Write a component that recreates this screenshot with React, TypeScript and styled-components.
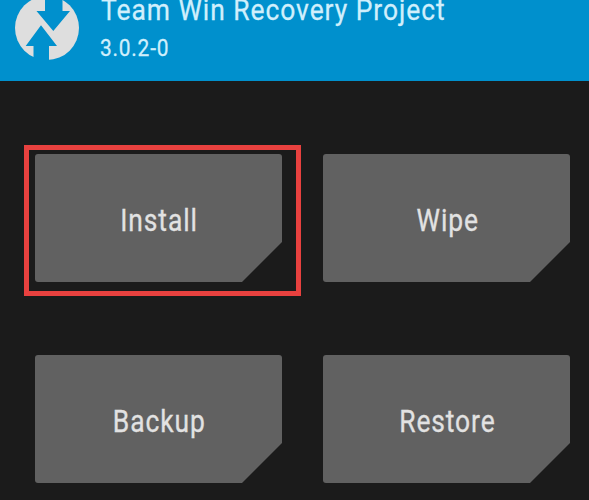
import React from 'react';
import styled, { createGlobalStyle } from 'styled-components';

const GlobalStyle = createGlobalStyle`
  *, *::before, *::after { box-sizing: border-box; }
  body { margin: 0; background: #1b1b1b; }
`;

const Screen = styled.main`
  display: flex;
  flex-direction: column;
  height: 500px;
  width: 589px;
  overflow: hidden;
  background: #1b1b1b;
  font-family: Roboto, sans-serif;
`;

const Header = styled.header`
  display: flex;
  height: 81px;
  flex: none;
  background: #0090cd;
  color: #d0effc;
`;

const Logo = styled.svg`
  flex: none;
  width: 100px;
  height: 81px;
`;

const Titles = styled.div`
  display: flex;
  flex-direction: column;
  align-items: flex-start;
  white-space: nowrap;
  -webkit-text-stroke: 0.3px;
`;

const Title = styled.h1`
  margin: -10px 0 0 1px;
  font-size: 30px;
  font-weight: 400;
  line-height: 40px;
  letter-spacing: 1.1px;
  transform: scaleX(0.88);
  transform-origin: left;
`;

const Version = styled.p`
  margin: 3px 0 0;
  font-size: 24px;
  line-height: 30px;
  letter-spacing: 0.9px;
  transform: scaleX(0.87);
  transform-origin: left;
`;

const Actions = styled.div`
  display: grid;
  grid-template-columns: 277px 277px;
  grid-template-rows: 151px 151px;
  column-gap: 11px;
  row-gap: 50px;
  padding: 64px 0 0 24px;
`;

const Slot = styled.div<{ $selected?: boolean }>`
  padding: 4px 0 0 6px;
  border: 5px solid ${(p) => (p.$selected ? '#e8413f' : 'transparent')};
`;

const Action = styled.button`
  display: flex;
  align-items: center;
  justify-content: center;
  width: 247px;
  height: 128px;
  padding: 3px 0 0 2px;
  border: 0;
  background: #616161;
  color: #e2e2e2;
  font: 400 32px/40px Roboto, sans-serif;
  clip-path: path('M3 0H244Q247 0 247 3V88L207 128H3Q0 128 0 125V3Q0 0 3 0Z');
`;

const Label = styled.span`
  letter-spacing: 1.1px;
  -webkit-text-stroke: 0.3px;
  transform: scaleX(0.825);
`;

const actions = [
  { name: 'Install', selected: true },
  { name: 'Wipe' },
  { name: 'Backup' },
  { name: 'Restore' },
];

export default function App() {
  return (
    <Screen>
      <GlobalStyle />
      <Header>
        <Logo viewBox="0 0 100 81" aria-label="TWRP">
          <circle cx="47" cy="28" r="32" fill="#dedede" />
          <path d="M45 -6H62.5V11H70L53.3 31L36.5 11H45Z" fill="#0090cd" />
          <path d="M33.5 62V46H25.7L41 25.3L57 46H49V62Z" fill="#0090cd" />
        </Logo>
        <Titles>
          <Title>Team Win Recovery Project</Title>
          <Version>3.0.2-0</Version>
        </Titles>
      </Header>
      <Actions>
        {actions.map((a) => (
          <Slot key={a.name} $selected={a.selected}>
            <Action type="button">
              <Label>{a.name}</Label>
            </Action>
          </Slot>
        ))}
      </Actions>
    </Screen>
  );
}
